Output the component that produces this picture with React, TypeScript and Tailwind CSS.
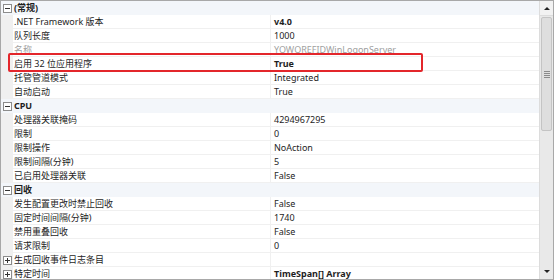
import React from "react";

type Row =
  | { kind: "cat"; label: string }
  | { kind: "prop"; name: string; value: string; bold?: boolean; dim?: boolean; expand?: boolean };

const ROWS: Row[] = [
  { kind: "cat", label: "(常规)" },
  { kind: "prop", name: ".NET Framework 版本", value: "v4.0", bold: true },
  { kind: "prop", name: "队列长度", value: "1000" },
  { kind: "prop", name: "名称", value: "YOWOREFIDWinLogonServer", dim: true },
  { kind: "prop", name: "启用 32 位应用程序", value: "True", bold: true },
  { kind: "prop", name: "托管管道模式", value: "Integrated" },
  { kind: "prop", name: "自动启动", value: "True" },
  { kind: "cat", label: "CPU" },
  { kind: "prop", name: "处理器关联掩码", value: "4294967295" },
  { kind: "prop", name: "限制", value: "0" },
  { kind: "prop", name: "限制操作", value: "NoAction" },
  { kind: "prop", name: "限制间隔(分钟)", value: "5" },
  { kind: "prop", name: "已启用处理器关联", value: "False" },
  { kind: "cat", label: "回收" },
  { kind: "prop", name: "发生配置更改时禁止回收", value: "False" },
  { kind: "prop", name: "固定时间间隔(分钟)", value: "1740" },
  { kind: "prop", name: "禁用重叠回收", value: "False" },
  { kind: "prop", name: "请求限制", value: "0" },
  { kind: "prop", name: "生成回收事件日志条目", value: "", expand: true },
  { kind: "prop", name: "特定时间", value: "TimeSpan[] Array", bold: true, expand: true },
];

function Toggle({ open }: { open: boolean }) {
  return (
    <div className="relative w-[9px] h-[9px] border border-[#8c8c8c] bg-white">
      <div className="absolute left-[1px] top-[3px] w-[5px] h-px bg-[#333]" />
      {!open && <div className="absolute left-[3px] top-[1px] w-px h-[5px] bg-[#333]" />}
    </div>
  );
}

export default function App() {
  return (
    <div
      className="relative w-[554px] h-[280px] overflow-hidden bg-white border border-[#a8a8a8] flex text-[9px] leading-[14px] text-[#1e1e1e]"
      style={{ fontFamily: '"Noto Sans", "Noto Sans CJK SC", sans-serif' }}
    >
      <div className="flex-1 flex flex-col">
        {ROWS.map((r, i) =>
          r.kind === "cat" ? (
            <div key={i} className="h-[14px] shrink-0 flex items-center bg-[#f3f6fa]">
              <div className="w-[12px] flex justify-center">
                <Toggle open />
              </div>
              <span className="font-bold pl-px">{r.label}</span>
            </div>
          ) : (
            <div key={i} className="h-[14px] shrink-0 flex">
              <div className="w-[12px] bg-[#f0f0f0] flex items-center justify-center">
                {r.expand && <Toggle open={false} />}
              </div>
              <div
                className={`w-[257px] pl-px border-b border-[#f0f0f0] whitespace-nowrap ${
                  r.dim ? "text-[#a0a0a0]" : ""
                }`}
              >
                {r.name}
              </div>
              <div
                className={`flex-1 pl-[3px] border-l border-b border-[#f0f0f0] whitespace-nowrap ${
                  r.bold ? "font-bold" : ""
                } ${r.dim ? "text-[#a0a0a0]" : ""}`}
              >
                {r.value}
              </div>
            </div>
          )
        )}
      </div>

      <div className="w-[14px] shrink-0 flex flex-col bg-[#e9e9e9] border-l border-[#dcdcdc]">
        <div className="h-[15px] flex items-center justify-center bg-[#f2f2f2] border-b border-[#dcdcdc]">
          <div className="w-0 h-0 border-l-[3px] border-r-[3px] border-b-[3px] border-l-transparent border-r-transparent border-b-[#222]" />
        </div>
        <div className="flex-1 flex flex-col px-px">
          <div className="h-[114px] mt-px bg-[#dedede] border border-[#c4c4c4] rounded-[2px] flex items-center justify-center">
            <div className="flex flex-col gap-px">
              <div className="w-[6px] h-px bg-[#8a8a8a]" />
              <div className="w-[6px] h-px bg-[#8a8a8a]" />
              <div className="w-[6px] h-px bg-[#8a8a8a]" />
              <div className="w-[6px] h-px bg-[#8a8a8a]" />
            </div>
          </div>
        </div>
        <div className="h-[15px] flex items-center justify-center">
          <div className="w-0 h-0 border-l-[3px] border-r-[3px] border-t-[3px] border-l-transparent border-r-transparent border-t-[#222]" />
        </div>
      </div>

      <div className="absolute left-[7px] top-[52px] w-[415px] h-[19px] border-2 border-[#e3262b] rounded-[2px] pointer-events-none" />
    </div>
  );
}
